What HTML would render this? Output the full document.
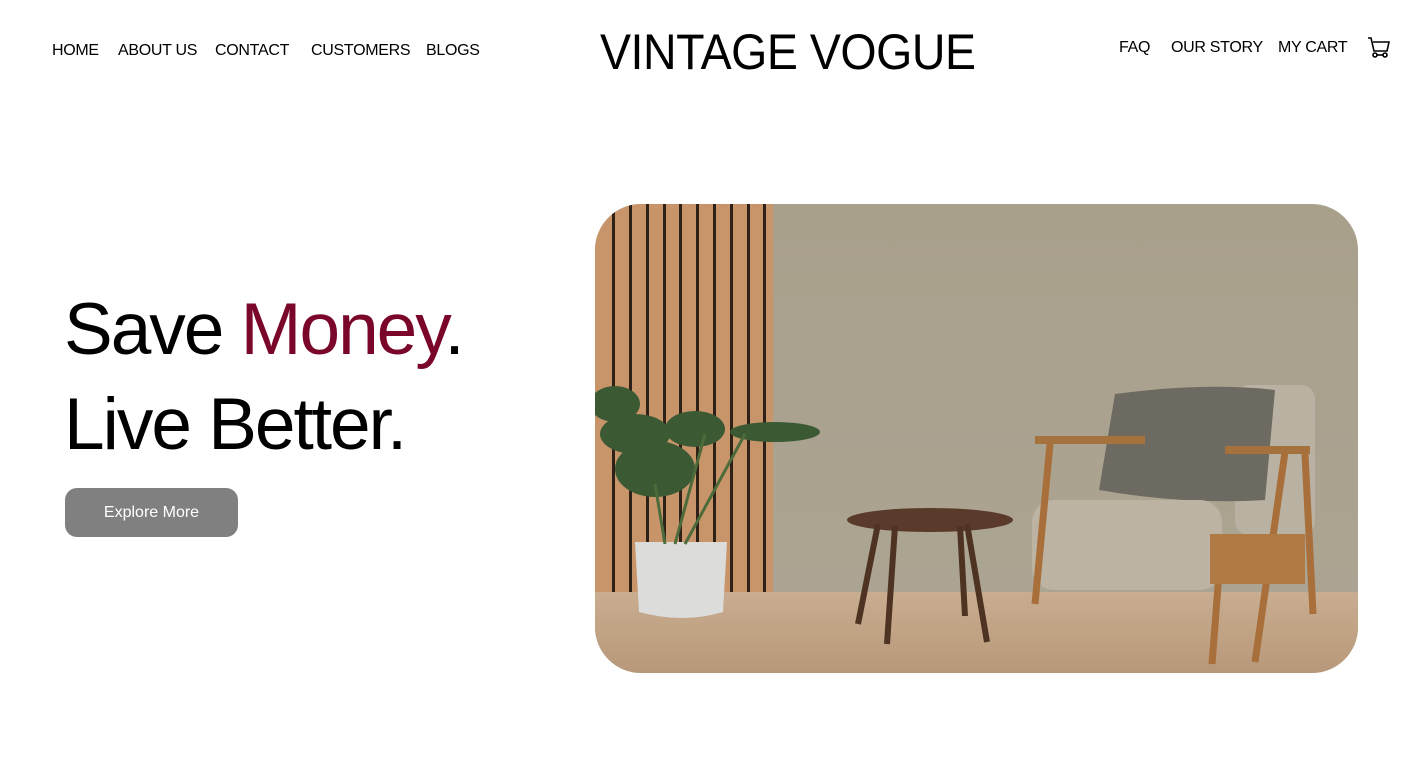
<!DOCTYPE html>
<html><head><meta charset="utf-8"><style>
*{margin:0;padding:0;box-sizing:border-box}
body{width:1424px;height:758px;background:#fff;font-family:"Liberation Sans",sans-serif;position:relative;overflow:hidden;color:#000}
.nav{position:absolute;top:42px;font-size:16px;letter-spacing:-0.3px}
.nav span{position:absolute;white-space:nowrap}
.title{position:absolute;left:600px;top:23px;font-size:50px;letter-spacing:-0.5px;white-space:nowrap;transform-origin:left top;transform:scaleX(0.93)}
.h{position:absolute;left:64px;font-size:73px;letter-spacing:-2px;white-space:nowrap}
.btn{position:absolute;left:65px;top:488px;width:173px;height:49px;background:#808080;border-radius:12px;color:#fff;font-size:16px;text-align:center;line-height:49px}
.img{position:absolute;left:595px;top:204px;width:763px;height:469px;border-radius:46px;overflow:hidden}
</style></head><body>
<div class="nav"><span style="left:52px">HOME</span><span style="left:118px">ABOUT US</span><span style="left:215px">CONTACT</span><span style="left:311px">CUSTOMERS</span><span style="left:426px">BLOGS</span></div>
<div class="nav" style="top:39px"><span style="left:1119px">FAQ</span><span style="left:1171px">OUR STORY</span><span style="left:1278px">MY CART</span></div>
<svg style="position:absolute;left:1367px;top:36px" width="24" height="24" viewBox="0 0 24 24" fill="none" stroke="#000" stroke-width="1.6"><path d="M1 2h3l3 13h13l2-9H6"/><circle cx="8" cy="19" r="2"/><circle cx="18" cy="19" r="2"/><path d="M10 19h6"/></svg>
<div class="title">VINTAGE VOGUE</div>
<div class="h" style="top:288px">Save <span style="color:#7a0629">Money</span>.</div>
<div class="h" style="top:383px">Live Better.</div>
<div class="btn">Explore More</div>
<div class="img"><svg width="763" height="469" viewBox="0 0 763 469">
<defs><linearGradient id="w" x1="0" y1="0" x2="0" y2="1"><stop offset="0" stop-color="#a9a08c"/><stop offset="1" stop-color="#aca593"/></linearGradient>
<linearGradient id="f" x1="0" y1="0" x2="0" y2="1"><stop offset="0" stop-color="#c9ad90"/><stop offset="1" stop-color="#b8987a"/></linearGradient></defs>
<rect width="763" height="469" fill="url(#w)"/>
<rect x="0" y="0" width="178" height="390" fill="#c8956a"/>
<g fill="#2e2118">
<rect x="17" y="0" width="3" height="390"/><rect x="34" y="0" width="3" height="390"/><rect x="51" y="0" width="3" height="390"/><rect x="68" y="0" width="3" height="390"/><rect x="84" y="0" width="3" height="390"/><rect x="101" y="0" width="3" height="390"/><rect x="118" y="0" width="3" height="390"/><rect x="135" y="0" width="3" height="390"/><rect x="152" y="0" width="3" height="390"/><rect x="168" y="0" width="3" height="390"/></g>
<rect x="0" y="388" width="763" height="81" fill="url(#f)"/>
<path d="M40 338h92l-4 70q-40 12-84 0z" fill="#dcdcda"/>
<g fill="#3b5a34"><ellipse cx="60" cy="265" rx="40" ry="28"/><ellipse cx="20" cy="200" rx="25" ry="18"/><ellipse cx="100" cy="225" rx="30" ry="18"/><ellipse cx="180" cy="228" rx="45" ry="10"/><ellipse cx="40" cy="230" rx="35" ry="20"/></g>
<path d="M70 340l-10-60M80 340l30-110M90 340l60-110" stroke="#4d6b3a" stroke-width="3"/>
<ellipse cx="335" cy="316" rx="83" ry="12" fill="#5a3b2b"/>
<path d="M283 320l-20 100M300 322l-8 118M365 322l5 90M372 320l20 118" stroke="#4e3322" stroke-width="6"/>
<rect x="640" y="181" width="80" height="150" rx="14" fill="#b9b1a2"/>
<path d="M520 190q90-12 160-4l-10 110q-80 5-166-10z" fill="#6d6a62"/>
<rect x="437" y="296" width="190" height="90" rx="22" fill="#bcb3a3"/>
<path d="M440 236l110 0M630 246h85" stroke="#a5713d" stroke-width="8"/>
<path d="M455 240l-15 160M690 248l-30 210M710 250l8 160M627 330l-10 130" stroke="#a86f3a" stroke-width="7"/>
<rect x="615" y="330" width="95" height="50" fill="#b07a44"/>
</svg></div>
</body></html>
